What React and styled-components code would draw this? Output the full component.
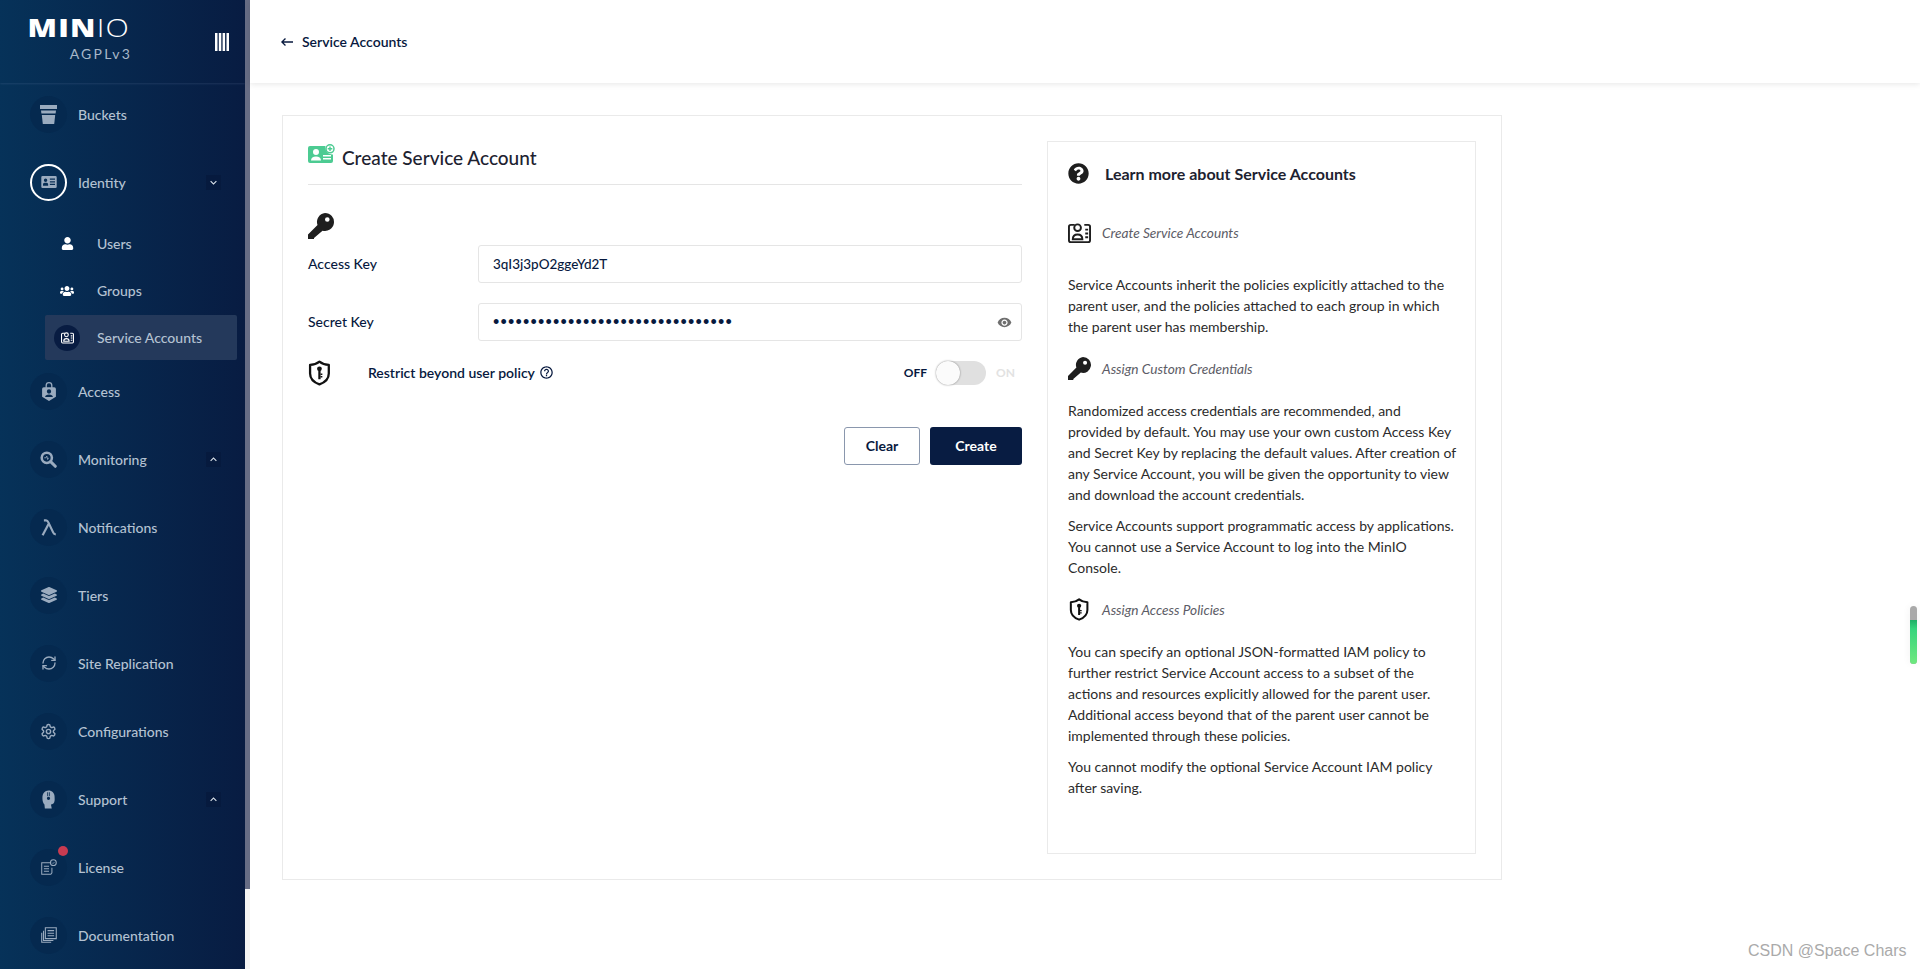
import React from "react";
import styled, { createGlobalStyle } from "styled-components";
import { MdVisibility, MdHelpOutline, MdKeyboardArrowDown, MdKeyboardArrowUp, MdKeyboardBackspace } from "react-icons/md";
import { FaQuestionCircle, FaUser, FaUsers, FaLayerGroup } from "react-icons/fa";
import { LuSettings, LuRefreshCw } from "react-icons/lu";

const GlobalStyle = createGlobalStyle`
  html, body {
    margin: 0;
    padding: 0;
    background: #fff;
    font-family: "Lato", "Liberation Sans", sans-serif;
    overflow: hidden;
  }
  * { box-sizing: border-box; }
`;

/* custom icons */
const BucketIcon = () => (
  <svg width="17" height="19" viewBox="0 0 17 19" fill="currentColor">
    <path d="M0 0h17v4H0z" />
    <path d="M1 5.500h15l-.4 3H1.400z" />
    <path d="M1.800 10h13.400l-1 9H2.800z" />
  </svg>
);
const CardIcon = () => (
  <svg width="16" height="12" viewBox="0 0 18 14" fill="currentColor">
    <path fillRule="evenodd" d="M1.500 0h15A1.500 1.500 0 0 1 18 1.500v11a1.500 1.500 0 0 1-1.500 1.500h-15A1.500 1.500 0 0 1 0 12.500v-11A1.500 1.500 0 0 1 1.500 0zM5 3a2 2 0 1 0 0 4 2 2 0 0 0 0-4zM2 11.500h6V9.500C8 8.500 6.500 8 5 8S2 8.500 2 9.500zM10 3v1.500h6V3zM10 6v1.500h6V6zM10 9v1.500h6V9z" />
  </svg>
);
const SmallCardIcon = ({ size = 13 }) => (
  <svg width={size} height={size} viewBox="0 0 24 22" fill="none" stroke="currentColor" strokeWidth="2">
    <path d="M7 3H3a2 2 0 0 0-2 2v14a2 2 0 0 0 2 2h18a2 2 0 0 0 2-2V5a2 2 0 0 0-2-2h-4" />
    <circle cx="10" cy="6" r="3.500" />
    <path d="M5 18c0-3 2-5 5-5s5 2 5 5z" />
    <path d="M18 8h3M18 12h3M18 16h3" />
  </svg>
);
const AccessIcon = () => (
  <svg width="14" height="19" viewBox="0 0 16 22" fill="currentColor">
    <path fillRule="evenodd" d="M4 6V4a4 4 0 0 1 8 0v2h2a2 2 0 0 1 2 2v9l-8 5-8-5V8a2 2 0 0 1 2-2zM5.500 6h5V4a2.500 2.500 0 0 0-5 0zM8 8.500a2.500 2.500 0 1 0 0 5 2.500 2.500 0 0 0 0-5zM3.500 17.500h9c0-2-2-3-4.500-3s-4.500 1-4.500 3z" />
  </svg>
);
const MonitorIcon = () => (
  <svg width="17" height="17" viewBox="0 0 20 20" fill="none" stroke="currentColor">
    <circle cx="8" cy="8" r="6" strokeWidth="3" />
    <path d="M12.500 12.500L18 18" strokeWidth="3.500" strokeLinecap="round" />
    <path d="M5 8h2l1-2 1 4 1-2" strokeWidth="1" />
  </svg>
);
const LambdaIcon = () => (
  <svg width="16" height="17" viewBox="0 0 18 20" fill="none" stroke="currentColor" strokeWidth="2.600">
    <path d="M3 1.500h2.500c1.500 0 2 .8 2.600 2.200L14 16c.6 1.400 1.300 2 3 2" />
    <path d="M8.500 6L1.500 19" />
  </svg>
);
const SupportIcon = () => (
  <svg width="13" height="19" viewBox="0 0 16 22" fill="currentColor">
    <path fillRule="evenodd" d="M8 0c4.500 0 7.500 3.200 7.500 7.500 0 2.500.5 4-.5 7-.6 1.800-2 2.500-4 2.500l1 5H3.500L3 17C1.500 15.500.5 13 .5 9 .5 3.500 3.500 0 8 0zM8 7.500a2 2 0 1 0 0 4 2 2 0 0 0 0-4zM6.500 2v5h1V2zM8.500 2v5h1V2z" />
  </svg>
);
const LicenseIcon = () => (
  <svg width="16" height="16" viewBox="0 0 22 22" fill="none" stroke="currentColor" strokeWidth="1.400">
    <path d="M13 5H1v16h12.500l1.500-2v-7" />
    <path d="M4 10h7M4 13.500h7M4 17h7" />
    <circle cx="17" cy="5" r="4" />
    <path d="M15.200 5l1.300 1.300 2.200-2.300" strokeWidth="1" />
  </svg>
);
const DocIcon = () => (
  <svg width="16" height="16" viewBox="0 0 22 22" fill="none" stroke="currentColor" strokeWidth="1.500">
    <path d="M6 1h15v15H6z" />
    <path d="M9 5h9M9 8.500h9M9 12h9" />
    <path d="M3.500 5v13.500H17" />
    <path d="M1 8v13h13" />
  </svg>
);
const KeyIcon = ({ size = 26 }) => (
  <svg width={size} height={size} viewBox="0 0 26 26" fill="#1e1e1e">
    <path fillRule="evenodd" d="M17 0a9 9 0 1 1-2.500 17.650L6 25v1H0v-4.500l9.500-9.500A9 9 0 0 1 17 0zm2.300 4.200a2.300 2.300 0 1 0 0 4.600 2.300 2.300 0 0 0 0-4.600z" />
  </svg>
);
const ShieldIcon = ({ size = 26 }) => (
  <svg width={size * 0.88} height={size} viewBox="0 0 22 25" fill="none">
    <path d="M11 1.500c2.500 2 5.500 3 9 3.200V13c0 5-3.500 8.500-9 10.500C5.500 21.500 2 18 2 13V4.700c3.500-.2 6.500-1.200 9-3.200z" stroke="#111" strokeWidth="2.200" strokeLinejoin="round" />
    <circle cx="11" cy="8.500" r="2.300" fill="#111" />
    <path d="M9.900 10h2.200v8.500H9.900z" fill="#111" />
    <path d="M12 13h1.800v1.400H12zM12 15.500h1.800v1.400H12z" fill="#111" />
  </svg>
);
const NewAccountIcon = () => (
  <svg width="27" height="19" viewBox="0 0 27 19" fill="#4ccb92">
    <path fillRule="evenodd" d="M2 2h15.500a7 7 0 0 0 7.500 8.500V17a2 2 0 0 1-2 2H2a2 2 0 0 1-2-2V4a2 2 0 0 1 2-2zM8 5a3 3 0 1 0 0 6 3 3 0 0 0 0-6zM3 16.500h10c0-2.500-2-4-5-4s-5 1.500-5 4zM15 11v1.500h8V11zM15 14v1.500h8V14z" />
    <circle cx="22" cy="4.800" r="4" fill="none" stroke="#4ccb92" strokeWidth="1.500" />
    <path d="M19.700 4.100h4.600v1.400h-4.600zM21.300 2.500h1.400v4.600h-1.400z" />
  </svg>
);
const BarsIcon = () => (
  <svg width="14" height="18" viewBox="0 0 14 18" fill="#fff">
    <path d="M0 0h2.500v18H0zM3.800 0h2.500v18H3.800zM7.600 0h2.500v18H7.600zM11.500 0H14v18h-2.500z" />
  </svg>
);

const navTop = [
  { label: "Buckets", icon: <BucketIcon /> },
  { label: "Identity", icon: <CardIcon />, active: true, arrow: "down" },
];
const navSub = [
  { label: "Users", icon: <FaUser size={13} /> },
  { label: "Groups", icon: <FaUsers size={14} /> },
  { label: "Service Accounts", icon: <SmallCardIcon />, selected: true },
];
const navBottom = [
  { label: "Access", icon: <AccessIcon /> },
  { label: "Monitoring", icon: <MonitorIcon />, arrow: "up" },
  { label: "Notifications", icon: <LambdaIcon /> },
  { label: "Tiers", icon: <FaLayerGroup size={16} /> },
  { label: "Site Replication", icon: <LuRefreshCw size={16} /> },
  { label: "Configurations", icon: <LuSettings size={17} /> },
  { label: "Support", icon: <SupportIcon />, arrow: "up" },
  { label: "License", icon: <LicenseIcon />, badge: true },
  { label: "Documentation", icon: <DocIcon /> },
];

function NavRow({ item }) {
  return (
    <Row>
      <Circle $active={item.active}>
        {item.icon}
        {item.badge && <Badge />}
      </Circle>
      <NavLabel>{item.label}</NavLabel>
      {item.arrow && (
        <Arrow>{item.arrow === "down" ? <MdKeyboardArrowDown size={13} /> : <MdKeyboardArrowUp size={13} />}</Arrow>
      )}
    </Row>
  );
}

export default function App() {
  return (
    <Page>
      <GlobalStyle />
      <Sidebar>
        <Brand>
          <Logo>
            <Wordmark>
              MIN<Thin>IO</Thin>
            </Wordmark>
            <License>AGPLv3</License>
          </Logo>
          <Collapse>
            <BarsIcon />
          </Collapse>
        </Brand>
        <Nav>
          {navTop.map((item) => (
            <NavRow key={item.label} item={item} />
          ))}
          <SubList>
            {navSub.map((item) => (
              <SubRow key={item.label} $selected={item.selected}>
                <SubIcon $selected={item.selected}>{item.icon}</SubIcon>
                <NavLabel>{item.label}</NavLabel>
              </SubRow>
            ))}
          </SubList>
          {navBottom.map((item) => (
            <NavRow key={item.label} item={item} />
          ))}
        </Nav>
      </Sidebar>
      <Rail>
        <RailThumb />
      </Rail>
      <Main>
        <Header>
          <BackLink>
            <MdKeyboardBackspace size={16} />
            <span>Service Accounts</span>
          </BackLink>
        </Header>
        <Card>
          <Form>
            <Title>
              <NewAccountIcon />
              <h1>Create Service Account</h1>
            </Title>
            <KeyWrap>
              <KeyIcon />
            </KeyWrap>
            <Field>
              <FieldLabel>Access Key</FieldLabel>
              <Input>3qI3j3pO2ggeYd2T</Input>
            </Field>
            <Field>
              <FieldLabel>Secret Key</FieldLabel>
              <Input>
                <Dots>{"•".repeat(32)}</Dots>
                <Eye>
                  <MdVisibility size={15} />
                </Eye>
              </Input>
            </Field>
            <ToggleRow>
              <ShieldIcon />
              <ToggleLabel>Restrict beyond user policy</ToggleLabel>
              <HelpMark>
                <MdHelpOutline size={15} />
              </HelpMark>
              <Off>OFF</Off>
              <Track>
                <Knob />
              </Track>
              <On>ON</On>
            </ToggleRow>
            <Buttons>
              <ClearButton>Clear</ClearButton>
              <CreateButton>Create</CreateButton>
            </Buttons>
          </Form>
          <Help>
            <HelpTitle>
              <FaQuestionCircle size={21} color="#1e1e1e" />
              <h2>Learn more about Service Accounts</h2>
            </HelpTitle>
            <Topic $first>
              <TopicIcon>
                <SmallCardIcon size={23} />
              </TopicIcon>
              <span>Create Service Accounts</span>
            </Topic>
            <Text $gap={30}>
              Service Accounts inherit the policies explicitly attached to the parent user, and the policies attached to
              each group in which the parent user has membership.
            </Text>
            <Topic>
              <TopicIcon>
                <KeyIcon size={23} />
              </TopicIcon>
              <span>Assign Custom Credentials</span>
            </Topic>
            <Text>
              Randomized access credentials are recommended, and provided by default. You may use your own custom Access
              Key and Secret Key by replacing the default values. After creation of any Service Account, you will be
              given the opportunity to view and download the account credentials.
            </Text>
            <Text $gap={10}>
              Service Accounts support programmatic access by applications. You cannot use a Service Account to log into
              the MinIO Console.
            </Text>
            <Topic>
              <TopicIcon>
                <ShieldIcon size={23} />
              </TopicIcon>
              <span>Assign Access Policies</span>
            </Topic>
            <Text>
              You can specify an optional JSON-formatted IAM policy to further restrict Service Account access to a
              subset of the actions and resources explicitly allowed for the parent user. Additional access beyond that
              of the parent user cannot be implemented through these policies.
            </Text>
            <Text $gap={10}>You cannot modify the optional Service Account IAM policy after saving.</Text>
          </Help>
        </Card>
      </Main>
      <Meter>
        <MeterFill />
      </Meter>
      <Watermark>CSDN @Space Chars</Watermark>
    </Page>
  );
}

const Page = styled.div`
  display: flex;
  width: 1920px;
  height: 969px;
  overflow: hidden;
  position: relative;
  background: #fff;
`;

const Sidebar = styled.aside`
  width: 245px;
  flex: none;
  height: 969px;
  overflow: hidden;
  background: linear-gradient(90deg, #063259, #081c42);
  color: #b4c2d2;
`;

const Brand = styled.div`
  height: 83px;
  display: flex;
  align-items: flex-start;
  justify-content: space-between;
  padding: 18px 16px 0 30px;
  box-shadow: 0 1px 2px rgba(120, 150, 190, 0.18);
`;

const Logo = styled.div`
  width: 100px;
  display: flex;
  flex-direction: column;
  align-items: flex-end;
`;

const Wordmark = styled.div`
  font-family: "Open Sans", sans-serif;
  font-weight: 800;
  font-size: 25px;
  line-height: 18px;
  letter-spacing: 1px;
  color: #fff;
  white-space: nowrap;
  transform: scaleX(1.22);
  transform-origin: right center;
`;

const Thin = styled.span`
  font-weight: 300;
`;

const License = styled.div`
  margin-top: 9px;
  font-size: 14px;
  line-height: 17px;
  letter-spacing: 2.2px;
  margin-right: -2px;
  color: #a8b8c9;
`;

const Collapse = styled.div`
  margin-top: 15px;
  line-height: 0;
`;

const Nav = styled.nav`
  margin-top: -3px;
`;

const Row = styled.div`
  position: relative;
  height: 68px;
  display: flex;
  align-items: center;
  padding: 0 24px 0 30px;
`;

const Circle = styled.div`
  position: relative;
  width: 37px;
  height: 37px;
  flex: none;
  border-radius: 50%;
  display: flex;
  align-items: center;
  justify-content: center;
  color: #9aabbf;
  background: ${(p) => (p.$active ? "transparent" : "#05294f")};
  border: ${(p) => (p.$active ? "2px solid #fff" : "none")};
`;

const Badge = styled.span`
  position: absolute;
  top: -3px;
  right: -1px;
  width: 10px;
  height: 10px;
  border-radius: 50%;
  background: #c83b51;
`;

const NavLabel = styled.span`
  margin-left: 11px;
  font-size: 14px;
  font-weight: 500;
  color: #b4c2d2;
  white-space: nowrap;
`;

const Arrow = styled.span`
  margin-left: auto;
  width: 15px;
  height: 15px;
  background: #061a3e;
  color: #dfe5ec;
  display: flex;
  align-items: center;
  justify-content: center;
`;

const SubList = styled.div`
  margin: 5px 8px -3px 45px;
  display: flex;
  flex-direction: column;
  gap: 2px;
`;

const SubRow = styled.div`
  height: 45px;
  display: flex;
  align-items: center;
  padding-left: 9px;
  border-radius: 2px;
  background: ${(p) => (p.$selected ? "#24395b" : "transparent")};
`;

const SubIcon = styled.span`
  width: 26px;
  height: 26px;
  flex: none;
  border-radius: 50%;
  display: flex;
  align-items: center;
  justify-content: center;
  margin-right: 6px;
  color: #fff;
  background: ${(p) => (p.$selected ? "#081c42" : "transparent")};
`;

const Rail = styled.div`
  width: 5px;
  flex: none;
  height: 969px;
  background: #f4f4f4;
`;

const RailThumb = styled.div`
  height: 889px;
  background: #676d85;
`;

const Main = styled.main`
  flex: 1;
  min-width: 0;
`;

const Header = styled.header`
  height: 83px;
  background: #fff;
  padding-left: 29px;
  display: flex;
  align-items: center;
  box-shadow: 0 1px 6px rgba(0, 0, 0, 0.1);
`;

const BackLink = styled.div`
  display: flex;
  align-items: center;
  gap: 7px;
  font-size: 14px;
  font-weight: 600;
  color: #07193e;
`;

const Card = styled.section`
  margin: 32px 0 0 32px;
  width: 1220px;
  height: 765px;
  border: 1px solid #eaeaea;
  padding: 25px;
  display: grid;
  grid-template-columns: 714px 429px;
  column-gap: 25px;
  align-items: stretch;
`;

const Form = styled.div`
  color: #07193e;
`;

const Title = styled.div`
  height: 44px;
  display: flex;
  align-items: center;
  gap: 7px;
  border-bottom: 1px solid #e5e5e5;
  padding-bottom: 11px;

  svg {
    margin-top: -7px;
  }

  h1 {
    margin: 0;
    font-size: 19px;
    font-weight: 500;
    color: #1d2230;
  }
`;

const KeyWrap = styled.div`
  margin-top: 28px;
  height: 26px;
  line-height: 0;
`;

const Field = styled.div`
  margin-top: 6px;
  height: 38px;
  display: flex;
  align-items: center;
  & + & {
    margin-top: 20px;
  }
`;

const FieldLabel = styled.label`
  width: 170px;
  flex: none;
  padding-bottom: 2px;
  font-size: 14px;
  font-weight: 500;
`;

const Input = styled.div`
  flex: 1;
  height: 38px;
  border: 1px solid #e5e5e5;
  border-radius: 3px;
  padding: 0 9px 0 14px;
  display: flex;
  align-items: center;
  justify-content: space-between;
  font-size: 13.500px;
  font-weight: 500;
`;

const Dots = styled.span`
  font-size: 18px;
  letter-spacing: 1.2px;
  font-family: "Liberation Sans", sans-serif;
`;

const Eye = styled.span`
  display: flex;
  color: #6f6f6f;
`;

const ToggleRow = styled.div`
  margin-top: 18px;
  height: 27px;
  display: flex;
  align-items: center;
`;

const ToggleLabel = styled.span`
  margin-left: 37px;
  font-size: 14px;
  font-weight: 600;
`;

const HelpMark = styled.span`
  margin-left: 4px;
  display: flex;
`;

const Off = styled.span`
  margin-left: auto;
  font-size: 12px;
  font-weight: 700;
`;

const On = styled.span`
  width: 19px;
  margin: 0 7px 0 10px;
  font-size: 12px;
  font-weight: 700;
  color: #e2e2e2;
`;

const Track = styled.div`
  margin-left: 9px;
  width: 50px;
  height: 24px;
  border-radius: 12px;
  background: #e0e0e0;
`;

const Knob = styled.div`
  width: 24px;
  height: 24px;
  border-radius: 50%;
  background: #fbfbfb;
  box-shadow: 0 0 2px rgba(0, 0, 0, 0.45);
`;

const Buttons = styled.div`
  margin-top: 41px;
  display: flex;
  justify-content: flex-end;
  gap: 10px;
`;

const ClearButton = styled.button`
  width: 76px;
  height: 38px;
  padding: 0 0 2px;
  background: #fff;
  border: 1px solid #8a97ad;
  border-radius: 3px;
  font: 700 14px "Lato", sans-serif;
  color: #07193e;
`;

const CreateButton = styled.button`
  width: 92px;
  height: 38px;
  padding: 0 0 2px;
  background: #081c42;
  border: none;
  border-radius: 3px;
  font: 700 14px "Lato", sans-serif;
  color: #fff;
`;

const Help = styled.aside`
  border: 1px solid #eaeaea;
  padding: 0 19px 0 20px;
  height: 713px;
  color: #2b2b2b;
`;

const HelpTitle = styled.div`
  margin-top: 21px;
  display: flex;
  align-items: center;
  gap: 16px;

  h2 {
    margin: 0;
    font-size: 16px;
    font-weight: 700;
    color: #1d2230;
  }
`;

const Topic = styled.div`
  margin-top: ${(p) => (p.$first ? "36px" : "19px")};
  height: 24px;
  display: flex;
  align-items: center;
  gap: 11px;
  font-size: 13.700px;
  font-style: italic;
  color: #5c5c66;
`;

const TopicIcon = styled.span`
  width: 23px;
  display: flex;
  justify-content: center;
  color: #1e1e1e;
`;

const Text = styled.p`
  margin: ${(p) => p.$gap ?? 20}px 0 0;
  font-size: 14px;
  line-height: 21px;
  color: #2b2b2b;
`;

const Meter = styled.div`
  position: absolute;
  left: 1910px;
  top: 606px;
  width: 7px;
  height: 58px;
  border-radius: 4px;
  background: #a9a9a9;
  overflow: hidden;
  box-shadow: 0 0 8px rgba(0, 0, 0, 0.06);
`;

const MeterFill = styled.div`
  margin-top: 14px;
  height: 44px;
  background: linear-gradient(#1fae66, #35d47c 20%, #6fe87f);
`;

const Watermark = styled.div`
  position: absolute;
  left: 1748px;
  top: 942px;
  font: 16px "Liberation Sans", sans-serif;
  color: #aaa;
`;
